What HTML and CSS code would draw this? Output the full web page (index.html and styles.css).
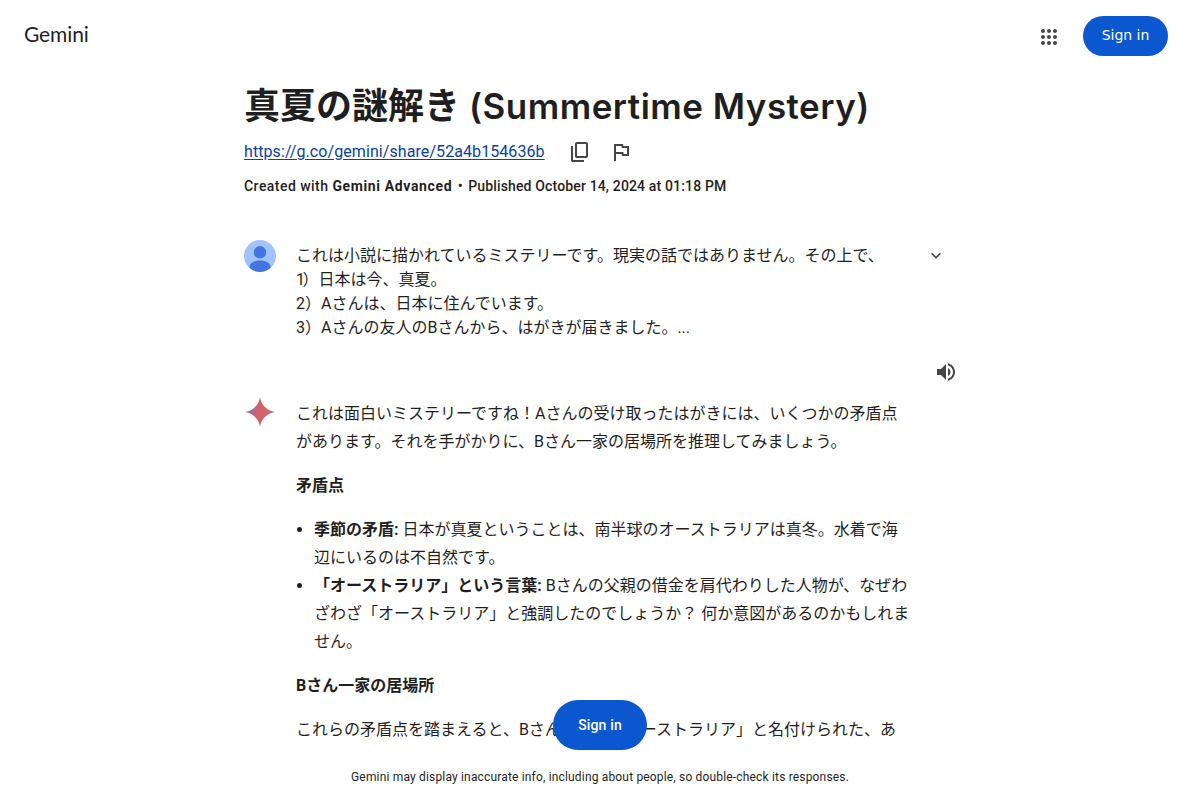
FILE: index.html
```html
<!DOCTYPE html>
<html lang="ja">
<head>
  <meta charset="UTF-8" />
  <meta name="viewport" content="width=device-width, initial-scale=1.0" />
  <title>Gemini - 真夏の謎解き (Summertime Mystery)</title>
  <link rel="stylesheet" href="styles.css">
</head>
<body>
  <header class="top-bar">
    <a class="logo">Gemini</a>
    <div class="top-actions">
      <svg class="apps-icon" viewBox="0 0 24 24" width="24" height="24">
        <path d="M6,8c1.1,0 2,-0.9 2,-2s-0.9,-2 -2,-2 -2,0.9 -2,2 0.9,2 2,2zM12,20c1.1,0 2,-0.9 2,-2s-0.9,-2 -2,-2 -2,0.9 -2,2 0.9,2 2,2zM6,20c1.1,0 2,-0.9 2,-2s-0.9,-2 -2,-2 -2,0.9 -2,2 0.9,2 2,2zM6,14c1.1,0 2,-0.9 2,-2s-0.9,-2 -2,-2 -2,0.9 -2,2 0.9,2 2,2zM12,14c1.1,0 2,-0.9 2,-2s-0.9,-2 -2,-2 -2,0.9 -2,2 0.9,2 2,2zM16,6c0,1.1 0.9,2 2,2s2,-0.9 2,-2 -0.9,-2 -2,-2 -2,0.9 -2,2zM12,8c1.1,0 2,-0.9 2,-2s-0.9,-2 -2,-2 -2,0.9 -2,2 0.9,2 2,2zM18,14c1.1,0 2,-0.9 2,-2s-0.9,-2 -2,-2 -2,0.9 -2,2 0.9,2 2,2zM18,20c1.1,0 2,-0.9 2,-2s-0.9,-2 -2,-2 -2,0.9 -2,2 0.9,2 2,2z"/>
      </svg>
      <button class="sign-in">Sign in</button>
    </div>
  </header>

  <main class="share-page">
    <h1>真夏の謎解き <span class="title-en">(Summertime Mystery)</span></h1>
    <div class="link-row">
      <a class="share-link" href="#">https://g.co/gemini/share/52a4b154636b</a>
      <svg class="copy-icon" viewBox="0 -960 960 960" width="24" height="24">
        <path d="M360-240q-33 0-56.500-23.500T280-320v-480q0-33 23.500-56.500T360-880h360q33 0 56.500 23.500T800-800v480q0 33-23.500 56.500T720-240H360Zm0-80h360v-480H360v480ZM200-80q-33 0-56.500-23.500T120-160v-560h80v560h440v80H200Z"/>
      </svg>
      <svg class="flag-icon" viewBox="0 -960 960 960" width="24" height="24">
        <path d="M200-120v-680h360l16 80h224v400H520l-16-80H280v280h-80Zm386-280h134v-240H510l-16-80H280v240h290l16 80Z"/>
      </svg>
    </div>
    <div class="meta">
      <span class="meta-created">Created with <strong>Gemini Advanced</strong></span><span class="dot">•</span><span class="meta-date">Published October 14, 2024 at 01:18 PM</span>
    </div>

    <section class="prompt">
      <svg class="avatar" viewBox="0 0 32 32" width="32" height="32">
        <clipPath id="avatar-clip"><circle cx="16" cy="16" r="16"/></clipPath>
        <circle cx="16" cy="16" r="16" fill="#a0c3ff"/>
        <g clip-path="url(#avatar-clip)" fill="#4374e0">
          <circle cx="16" cy="12.300" r="6.200"/>
          <path d="M5.500 27.500C5.500 22.800 10 20.600 16 20.600s10.500 2.200 10.500 6.900C24 31 20 32 16 32S8 31 5.500 27.500z"/>
        </g>
      </svg>
      <p class="prompt-text">これは小説に描かれているミステリーです。現実の話ではありません。その上で、<br><span class="narrow">1</span>）日本は今、真夏。<br>2）Aさんは、日本に住んでいます。<br>3）Aさんの友人のBさんから、はがきが届きました。...</p>
      <svg class="expand-icon" viewBox="0 -960 960 960" width="20" height="20">
        <path d="M480-344 240-584l56-56 184 184 184-184 56 56-240 240Z"/>
      </svg>
    </section>

    <div class="listen-row">
      <svg viewBox="0 0 24 24" width="24" height="24">
        <path d="M3 9v6h4l5 5V4L7 9H3zm13.500 3c0-1.770-1.020-3.290-2.500-4.030v8.050c1.480-.73 2.500-2.250 2.500-4.020zM14 3.230v2.060c2.890.86 5 3.540 5 6.710s-2.110 5.850-5 6.710v2.060c4.010-.91 7-4.490 7-8.770s-2.990-7.860-7-8.770z"/>
      </svg>
    </div>

    <section class="response">
      <svg class="spark" viewBox="0 0 32 32" width="32" height="32">
        <defs>
          <linearGradient id="spark-fill" x1="0" y1="0.400" x2="1" y2="0.600">
            <stop offset="0" stop-color="#5b75c8"/>
            <stop offset="0.240" stop-color="#a66a98"/>
            <stop offset="0.420" stop-color="#d2636b"/>
            <stop offset="0.720" stop-color="#cf6469"/>
            <stop offset="1" stop-color="#977585"/>
          </linearGradient>
        </defs>
        <path fill="url(#spark-fill)" d="M16 1C17.200 9 23 14.800 31 16C23 17.200 17.200 23 16 31C14.800 23 9 17.200 1 16C9 14.800 14.800 9 16 1z"/>
      </svg>
      <div class="response-text">
        <p>これは面白いミステリーですね！Aさんの受け取ったはがきには、いくつかの矛盾点があります。それを手がかりに、Bさん一家の居場所を推理してみましょう。</p>
        <p><strong>矛盾点</strong></p>
        <ul>
          <li><strong>季節の矛盾:</strong> 日本が真夏ということは、南半球のオーストラリアは真冬。水着で海辺にいるのは不自然です。</li>
          <li><strong>「オーストラリア」という言葉:</strong> Bさんの父親の借金を肩代わりした人物が、なぜわざわざ「オーストラリア」と強調したのでしょうか？ 何か意図があるのかもしれません。</li>
        </ul>
        <p><strong>Bさん一家の居場所</strong></p>
        <p>これらの矛盾点を踏まえると、Bさん一家は「オーストラリア」と名付けられた、あ</p>
      </div>
    </section>
  </main>

  <button class="sign-in-float">Sign in</button>
  <footer class="disclaimer">Gemini may display inaccurate info, including about people, so double-check its responses.</footer>
</body>
</html>
```
FILE: styles.css
```css
* {
  box-sizing: border-box;
  margin: 0;
  padding: 0;
}

body {
  height: 100vh;
  display: flex;
  flex-direction: column;
  overflow: hidden;
  position: relative;
  background: #fff;
  color: #1f1f1f;
  fill: #444746;
  font-family: Roboto, "Noto Sans CJK JP", sans-serif;
  font-size: 16px;
}

svg {
  display: block;
  flex-shrink: 0;
}

.top-bar {
  height: 72px;
  flex-shrink: 0;
  padding: 0 32px 0 24px;
  display: flex;
  align-items: center;
  justify-content: space-between;
}

.logo {
  font-family: Lato, sans-serif;
  font-size: 21px;
  line-height: 28px;
  letter-spacing: -0.1px;
  margin-bottom: 4px;
}

.top-actions {
  display: flex;
  align-items: center;
  gap: 22px;
}

.apps-icon {
  margin-top: 2px;
}

.sign-in {
  width: 85px;
  height: 40px;
  padding-bottom: 2px;
  border: none;
  border-radius: 20px;
  background: #0b57d0;
  color: #fff;
  font-family: "DejaVu Sans", sans-serif;
  font-size: 14px;
}

.share-page {
  flex: 1;
  min-height: 0;
  width: 712px;
  margin: 0 auto;
  overflow: hidden;
}

h1 {
  height: 44px;
  margin-top: 12px;
  font-size: 36px;
  line-height: 44px;
  white-space: nowrap;
}

.title-en {
  font-family: Inter, sans-serif;
  font-size: 35px;
  font-weight: 600;
  letter-spacing: 0.48px;
}

.link-row {
  height: 24px;
  margin-top: 12px;
  display: flex;
  align-items: center;
}

.share-link {
  width: 301px;
  color: #0842a0;
  line-height: 24px;
  letter-spacing: 0.08px;
  white-space: nowrap;
  text-underline-offset: 2px;
}

.copy-icon {
  margin-left: 23px;
}

.flag-icon {
  margin-left: 17px;
}

.meta {
  margin-top: 12px;
  display: flex;
  font-size: 14px;
  font-weight: 500;
  line-height: 20px;
  white-space: nowrap;
}

.meta-created {
  letter-spacing: 0.46px;
}

.meta-created strong {
  letter-spacing: 0.63px;
}

.meta-date {
  letter-spacing: 0.15px;
}

.dot {
  width: 16px;
  text-align: center;
}

.prompt {
  margin-top: 44px;
  display: flex;
  align-items: flex-start;
}

.prompt-text {
  width: 630px;
  margin: 4px 0 0 20px;
  line-height: 24px;
}

.narrow {
  letter-spacing: -2.5px;
}

.expand-icon {
  margin-top: 6px;
}

.listen-row {
  margin-top: 20px;
  display: flex;
  justify-content: flex-end;
  margin-right: -2px;
}

.response {
  margin-top: 12px;
  display: flex;
  gap: 20px;
}

.response-text {
  width: 616px;
  margin-top: 4px;
  line-height: 28px;
}

.response-text p,
.response-text ul {
  margin-bottom: 16px;
}

.response-text ul {
  padding-left: 18px;
}

.sign-in-float {
  position: absolute;
  left: 50%;
  bottom: 50px;
  transform: translateX(-50%);
  width: 94px;
  height: 50px;
  border: none;
  border-radius: 25px;
  background: #0b57d0;
  color: #fff;
  font-family: Roboto, sans-serif;
  font-size: 14px;
  font-weight: 500;
  letter-spacing: 0.15px;
}

.disclaimer {
  height: 56px;
  flex-shrink: 0;
  padding-top: 25px;
  text-align: center;
  font-size: 12px;
  line-height: 16px;
  letter-spacing: 0.17px;
}
```
